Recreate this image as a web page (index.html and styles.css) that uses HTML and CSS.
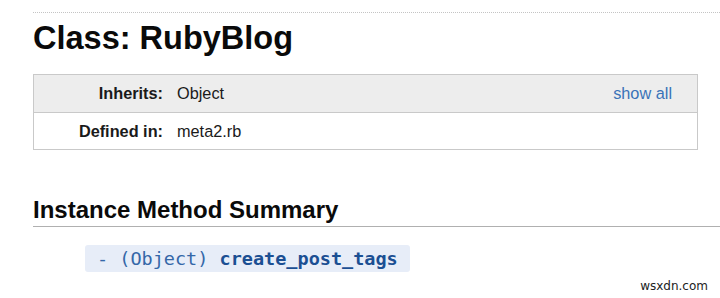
FILE: index.html
```html
<!DOCTYPE html>
<html>
<head>
<meta charset="utf-8">
<link rel="stylesheet" href="styles.css">
</head>
<body>
<div class="page">
  <h1 class="title">Class: RubyBlog</h1>
  <div class="box">
    <div class="row row-alt">
      <div class="label">Inherits:</div>
      <div class="value">Object</div>
      <a class="showall" href="#">show all</a>
    </div>
    <div class="row">
      <div class="label">Defined in:</div>
      <div class="value">meta2.rb</div>
    </div>
  </div>
  <h2 class="section">Instance Method Summary</h2>
  <div class="methods">
    <span class="sig"><span class="pre">- (Object) </span><strong class="name">create_post_tags</strong></span>
  </div>
</div>
<div class="watermark">wsxdn.com</div>
</body>
</html>
```
FILE: styles.css
```css
html, body {
  margin: 0;
  padding: 0;
  background: #fff;
}
body {
  width: 720px;
  height: 298px;
  overflow: hidden;
  position: relative;
  font-family: "Liberation Sans", Arial, sans-serif;
  color: #111;
}
.page {
  padding: 12px 0 0 33px;
}
.title {
  margin: 0;
  border-top: 1px dotted #c4c4c4;
  padding-top: 7px;
  font-size: 32.5px;
  line-height: 37px;
  font-weight: bold;
  color: #0a0a0a;
}
.box {
  margin-top: 17px;
  width: 663px;
  border: 1px solid #c9c9c9;
  font-size: 16.3px;
}
.row {
  display: flex;
  align-items: center;
  height: 36px;
}
.row-alt {
  background: #ededed;
  height: 37px;
  border-bottom: 1px solid #c9c9c9;
}
.label {
  width: 129px;
  padding-right: 14px;
  text-align: right;
  font-weight: bold;
  color: #1a1a1a;
}
.value {
  flex: 1;
  color: #1a1a1a;
}
.showall {
  color: #3a73b8;
  text-decoration: none;
  padding-right: 25px;
}
.section {
  margin: 46px 0 0 0;
  font-size: 24px;
  line-height: 28px;
  padding-bottom: 2px;
  border-bottom: 1px solid #b0b0b0;
  font-weight: bold;
  color: #0a0a0a;
}
.methods {
  margin-top: 18px;
  padding-left: 52px;
}
.sig {
  display: inline-block;
  background: #e7edf8;
  border-radius: 3px;
  padding: 3px 12px;
  font-family: "DejaVu Sans Mono", monospace;
  font-size: 18.5px;
  line-height: 21px;
  white-space: pre;
}
.pre {
  color: #3467a8;
}
.name {
  color: #1b4f93;
  font-weight: bold;
}
.watermark {
  position: absolute;
  right: 12px;
  bottom: 5px;
  font-family: "DejaVu Sans", sans-serif;
  font-size: 12px;
  color: #222;
}
```
